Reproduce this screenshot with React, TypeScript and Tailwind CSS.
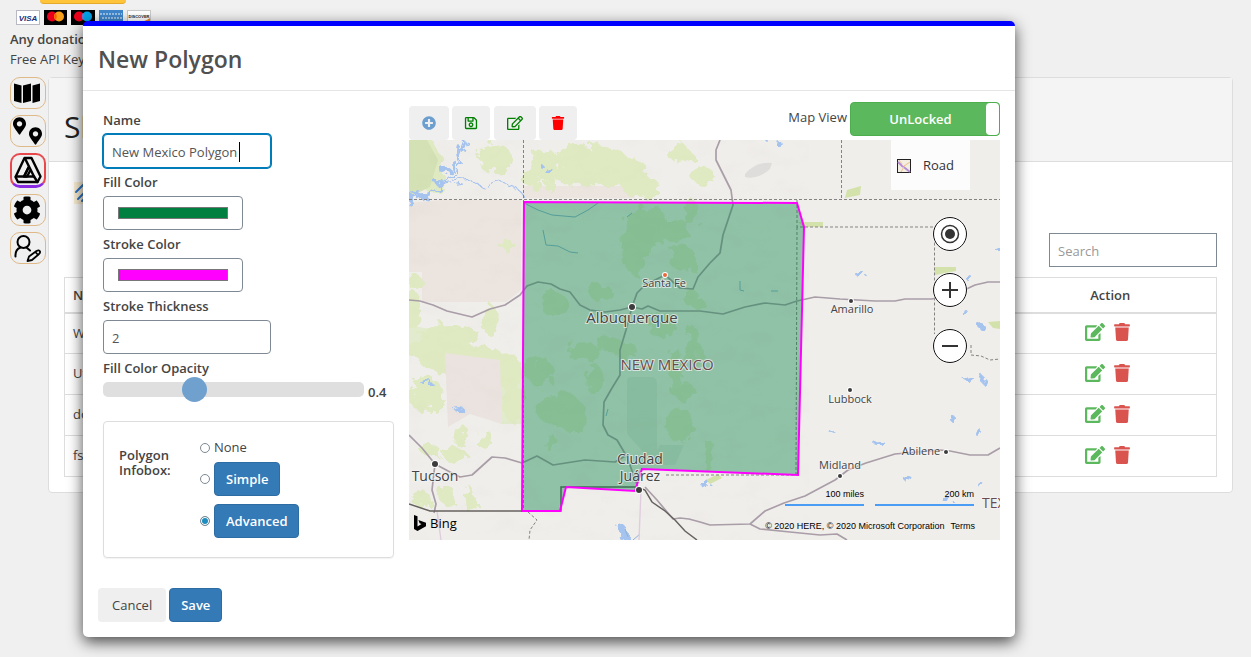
import { useState } from 'react';
import type { ReactNode } from 'react';
import { FaCog, FaEdit, FaMapMarkerAlt, FaPlusCircle, FaRegEdit, FaRegSave, FaTrash } from 'react-icons/fa';

const rows = ['Wyoming', 'Utah', 'downtown', 'fsdf'];

const greens: [number, number, number, number][] = [
  [418, 160, 22, 26], [434, 178, 12, 16], [494, 158, 18, 14], [545, 165, 14, 16], [532, 178, 10, 10],
  [590, 158, 36, 14], [615, 170, 32, 16], [640, 186, 18, 12], [550, 186, 6, 5], [578, 176, 24, 10],
  [680, 155, 12, 8], [703, 176, 12, 9], [680, 152, 7, 10], [508, 246, 9, 5], [415, 282, 8, 7],
  [412, 310, 9, 20], [450, 335, 30, 10], [490, 320, 7, 16], [440, 350, 34, 12], [470, 362, 50, 14],
  [500, 374, 25, 12], [426, 395, 17, 18], [512, 395, 10, 28], [460, 435, 7, 12], [485, 440, 9, 10],
  [430, 450, 10, 6], [455, 455, 12, 7], [422, 500, 10, 8], [470, 500, 4, 14], [447, 495, 8, 10],
];

const forests: [number, number, number, number][] = [
  [635, 245, 13, 30], [652, 225, 14, 20], [676, 230, 14, 12], [682, 258, 14, 12], [690, 212, 8, 14],
  [555, 305, 14, 12], [600, 292, 12, 8], [583, 352, 16, 10], [540, 372, 14, 14], [560, 410, 24, 16],
  [573, 420, 14, 12], [550, 442, 5, 10], [595, 380, 8, 16], [625, 350, 12, 8], [610, 345, 14, 8],
  [680, 425, 14, 18], [645, 434, 9, 7], [708, 455, 6, 16], [675, 365, 7, 18], [693, 350, 7, 24],
  [660, 325, 14, 12], [682, 390, 12, 9], [693, 300, 8, 8],
];

const lakes: [number, number, number, number][] = [
  [445, 170, 5, 5], [453, 165, 3, 6], [459, 152, 2, 7], [439, 182, 5, 3], [422, 194, 9, 3], [411, 200, 5, 5],
  [546, 168, 3, 4], [860, 274, 5, 2], [774, 142, 7, 2], [998, 248, 4, 2], [969, 278, 2, 4], [966, 314, 2, 4],
  [428, 384, 6, 2], [460, 410, 5, 2], [970, 380, 5, 3], [982, 379, 3, 3], [952, 418, 3, 3], [979, 433, 4, 3],
  [879, 443, 6, 2], [908, 479, 4, 3], [831, 431, 2, 2], [947, 499, 5, 3], [979, 483, 3, 2], [705, 484, 3, 5],
  [624, 534, 4, 8], [980, 325, 3, 3],
];

function Blobs({ items, fill, opacity = 1 }: { items: [number, number, number, number][]; fill: string; opacity?: number }) {
  return (
    <g fill={fill} opacity={opacity} filter="url(#rough)">
      {items.map(([cx, cy, rx, ry], i) => (
        <ellipse key={i} cx={cx} cy={cy} rx={rx} ry={ry} />
      ))}
    </g>
  );
}

function City({ x, y, tx, ty, size, children }: { x: number; y: number; tx: number; ty: number; size: number; children: ReactNode }) {
  return (
    <g>
      <circle cx={x} cy={y} r={size > 12 ? 3 : 2} fill="#3c3c3c" stroke="#fff" strokeOpacity="1" strokeWidth="2" />
      <text x={tx} y={ty} fontSize={size} textAnchor="middle">{children}</text>
    </g>
  );
}

function MapDrawing() {
  return (
    <svg
      viewBox="409 140 591 400"
      preserveAspectRatio="xMidYMid slice"
      className="block h-full w-full font-['Open_Sans','Noto_Sans',sans-serif]"
      role="img"
      aria-label="Road map with the New Mexico polygon"
    >
      <defs>
        <filter id="rough" x="-10%" y="-10%" width="120%" height="120%">
          <feTurbulence type="fractalNoise" baseFrequency="0.09" numOctaves="3" seed="4" />
          <feDisplacementMap in="SourceGraphic" scale="18" />
        </filter>
        <filter id="relief" x="0" y="0" width="100%" height="100%">
          <feTurbulence type="fractalNoise" baseFrequency="0.035 0.06" numOctaves="4" seed="8" />
          <feColorMatrix values="0 0 0 0 .55  0 0 0 0 .5  0 0 0 0 .42  .9 0 0 0 -.42" />
        </filter>
      </defs>
      <rect x="409" y="140" width="591" height="400" fill="#f0eeeb" />
      <path d="M409 203L440 200H521V290L506 302H422V272H409Z" fill="#ebe4df" />
      <path d="M523 186H640L634 198H523Z" fill="#ebe4df" />
      <path d="M409 325L450 333 480 350 521 362V424H500V375L470 358 409 350Z" fill="#e2ebcd" />
      <Blobs items={greens} fill="#dfeac2" />
      <path d="M445 353L500 360 502 424 470 414 448 427Z" fill="#eae3df" />
      <path d="M409 140H427L438 160 430 187 409 197Z" fill="#d3e1b4" />
      <path d="M798 222H823V227H804ZM847 190L861 186 860 195 845 198ZM934 267H956V271L935 275ZM706 480L718 474 722 478 710 484ZM988 322L1000 321V329L993 328Z" fill="#d3e2aa" />
      <path d="M745 174Q756 161 772 163L770 169Q758 180 745 177Z" fill="#dedddb" />
      <Blobs items={forests} fill="#c3dc88" opacity={0.32} />
      <path d="M627 380Q627 377 632 377H652Q657 377 657 385V455H646L627 434Z" fill="#e3e4df" />
      <path d="M660 445H684L675 465H648Z" fill="#e3e4df" />
      <rect x="409" y="140" width="400" height="400" filter="url(#relief)" opacity="0.16" />

      <g fill="none" stroke="#a4c2ef" strokeWidth="2.4" filter="url(#rough)">
        <path d="M467 141L460 160 457 173 446 182 436 190 421 198 409 202" />
        <path d="M446 184L470 179 485 188 500 183 517 188 523 197" strokeWidth="1.2" />
      </g>
      <Blobs items={lakes} fill="#a5c3ef" />
      <g fill="none" stroke="#8fb2d4" strokeWidth="1">
        <path d="M524 203L538 210 552 215 575 217 588 210 598 203" />
        <path d="M543 230L546 245 558 246 570 252 578 253M740 281V290L744 291M771 291H778M627 217L632 213M608 409L606 416" />
        <path d="M628 537L625 529M633 540L640 534" />
      </g>

      <g fill="none" stroke="#a99da8" strokeWidth="1.7" strokeLinejoin="round">
        <path d="M409 300L420 301 433 305 447 311 472 317 490 309 505 305 520 295 527 286 538 282 551 284 560 289 570 292 580 305 590 310 605 312 620 310 632 307 642 309 648 306 660 311 700 311 723 314 745 307 765 303 785 305 797 301 815 297 840 299 875 301 895 301 905 299 932 299 960 292 975 285 988 282 1000 282" />
        <path d="M632 307L637 293 645 285 665 275 680 288 693 289 698 277 710 263 720 253 723 235 733 205 731 190 721 170 716 160 716 150 720 140" />
        <path d="M632 307L626 330 620 350 620 375 612 388 604 402 603 425 608 435 617 440 627 457 639 490" />
        <path d="M409 435L422 448 435 464 450 472 460 477 472 475 492 457 505 458 522 463 537 456 553 465 585 460 615 462 627 455" />
        <path d="M435 464L432 490 436 504 434 513" />
        <path d="M645 487L657 500 673 519 680 518 689 519 700 522 710 525 750 524 765 511 784 503 805 496 835 480 848 470 866 463 895 454 940 450 950 451 970 455 988 455 1000 448" />
        <path d="M750 524L760 529 790 532 820 535 837 534 847 540" />
      </g>
      <g fill="none" stroke="#dfcddf" strokeWidth="1.4">
        <path d="M437 511L441 540M641 490L639 540" />
      </g>
      <path d="M409 504L430 511H561V487H637L645 490 652 502 665 511 675 520 685 531 697 540" fill="none" stroke="#66625f" strokeWidth="1.5" />
      <g fill="none" stroke="#858381" strokeWidth="1" strokeDasharray="3 2">
        <path d="M409 199.500H1000M523.500 140V511M841.500 140V199M797 200V227H934.500V334M797 227L796 475H664M971 345V355L981 356 990 360 1000 359" />
        <path d="M528 512L537 520 530 530 529 540" />
      </g>

      <path d="M524 202L797 203 804 227 798 475 642 469 635 491 566 487 560 511H522Z" fill="#008040" fillOpacity="0.4" stroke="#f0f" strokeWidth="2" />

      <g fill="#444" stroke="#f4f4f4" strokeOpacity="0.7" strokeWidth="2" paintOrder="stroke">
        <circle cx="665" cy="275" r="2" fill="#e9683a" stroke="#fff" strokeOpacity="1" />
        <text x="664" y="287" fontSize="11" textAnchor="middle">Santa Fe</text>
        <City x={632} y={307} tx={632} ty={323} size={15}>Albuquerque</City>
        <City x={435} y={464} tx={435} ty={481} size={14}>Tucson</City>
        <City x={639} y={490} tx={640} ty={481} size={14}>Juárez</City>
        <text x="640" y="464" fontSize="14" textAnchor="middle">Ciudad</text>
        <City x={851} y={301} tx={852} ty={313} size={11}>Amarillo</City>
        <City x={850} y={390} tx={850} ty={403} size={11}>Lubbock</City>
        <City x={840} y={476} tx={840} ty={469} size={11}>Midland</City>
        <City x={946} y={452} tx={921} ty={455} size={11}>Abilene</City>
        <g fill="#6a4a4e">
          <text x="667" y="370" fontSize="15" textAnchor="middle">NEW MEXICO</text>
          <text x="982" y="508" fontSize="14">TEXAS</text>
        </g>
      </g>
    </svg>
  );
}

function MapButton({ label, children }: { label: string; children: ReactNode }) {
  return (
    <button aria-label={label} className="size-[34px] rounded-full border border-[#111] bg-white shadow-[0_0_2px_#fff]">
      <svg viewBox="0 0 32 32" className="block size-full" fill="none" stroke="#333" strokeWidth="2">{children}</svg>
    </button>
  );
}

function MapPanel() {
  return (
    <div className="relative h-[400px] overflow-hidden">
      <MapDrawing />
      <button className="absolute top-0 right-[30px] flex h-[50px] w-[79px] items-center gap-3 bg-[#fcfcfc] pt-0.5 pl-1.5 text-[13px] text-[#333]">
        <svg viewBox="0 0 14 14" className="size-3.5">
          <rect x="0.500" y="0.500" width="13" height="13" fill="#f3ede2" stroke="#222" />
          <path d="M1 3L5 7 8 9 13 13" stroke="#b58ad6" strokeWidth="1.800" fill="none" />
          <path d="M2 1L5 5M7 7L13 3M4 13L8 6" stroke="#edc38a" fill="none" />
        </svg>
        Road
      </button>
      <div className="absolute top-[77px] right-[33px] flex flex-col gap-[22px]">
        <MapButton label="Locate me">
          <circle cx="16" cy="16" r="8.500" strokeWidth="1.500" />
          <circle cx="16" cy="16" r="5" fill="#333" stroke="none" />
        </MapButton>
        <MapButton label="Zoom in"><path d="M16 8V24M8 16H24" /></MapButton>
        <MapButton label="Zoom out"><path d="M8 16H24" /></MapButton>
      </div>
      <div className="absolute right-[26px] bottom-[34px] flex gap-[11px] text-right font-['Liberation_Sans',sans-serif] text-[9px] leading-3 text-black">
        <div className="w-[79px] border-b-2 border-[#4a9cf5] pb-1">100 miles</div>
        <div className="w-[99px] border-b-2 border-[#4a9cf5] pb-1">200 km</div>
      </div>
      <div className="absolute right-[25px] bottom-2 flex gap-1.5 font-['Liberation_Sans',sans-serif] text-[9px] leading-3 text-black">
        <span>© 2020 HERE, © 2020 Microsoft Corporation</span>
        <a href="#terms">Terms</a>
      </div>
      <div className="absolute bottom-[7px] left-[5px] flex items-center gap-1 text-[13px] leading-5 text-black">
        <svg viewBox="0 0 12 16" className="h-4 w-3"><path d="M0 0L3.500 1.200V11.500L7.500 9 5.600 8.200 4.400 5 12 7.800V11.300L3.500 16 0 14Z" /></svg>
        Bing
      </div>
    </div>
  );
}

const label = 'flex h-7 items-center pt-0.5 font-semibold';
const field = 'block h-[34px] rounded-[4px] border border-[#7e8993] bg-white';
const primary = 'h-[34px] rounded-[4px] border border-[#2e6da4] bg-[#337ab7] px-[11px] pt-0.5 font-semibold text-white';
const tool = 'flex h-[34px] items-center justify-center rounded-[4px] bg-[#efefef]';

function PolygonForm() {
  const [name, setName] = useState('New Mexico Polygon');
  const [fill, setFill] = useState('#008040');
  const [stroke, setStroke] = useState('#ff00ff');
  const [thickness, setThickness] = useState('2');
  const [opacity, setOpacity] = useState(0.4);
  const [box, setBox] = useState('advanced');
  const radio = (value: string) => (
    <input
      type="radio"
      name="infobox"
      id={`infobox-${value}`}
      aria-label={value}
      checked={box === value}
      onChange={() => setBox(value)}
      className="size-2.5 appearance-none rounded-full border border-[#7e8993] bg-white checked:bg-[#1e8cbe] checked:shadow-[inset_0_0_0_1px_#fff]"
    />
  );
  return (
    <form className="w-[296px] shrink-0 pt-[15px] pl-[5px]" onSubmit={(e) => e.preventDefault()}>
      <label htmlFor="name" className={label}>Name</label>
      <div className="relative w-[168px]">
        <input id="name" value={name} onChange={(e) => setName(e.target.value)} className="block h-[34px] w-full rounded-[4px] border border-[#007cba] bg-white px-2 pt-0.5 text-[#555] shadow-[0_0_0_1px_#007cba] outline-none" />
        <span className="absolute top-2 left-[136px] h-5 w-px bg-black" />
      </div>
      <label htmlFor="fill" className={label}>Fill Color</label>
      <input id="fill" type="color" value={fill} onChange={(e) => setFill(e.target.value)} className={`${field} w-[140px] px-3 py-1.5`} />
      <label htmlFor="stroke" className={label}>Stroke Color</label>
      <input id="stroke" type="color" value={stroke} onChange={(e) => setStroke(e.target.value)} className={`${field} w-[140px] px-3 py-1.5`} />
      <label htmlFor="thickness" className={label}>Stroke Thickness</label>
      <input id="thickness" value={thickness} onChange={(e) => setThickness(e.target.value)} className={`${field} w-[168px] px-2 pt-0.5 text-[#555]`} />
      <label htmlFor="opacity" className={label}>Fill Color Opacity</label>
      <div className="flex h-[15px] items-center gap-1">
        <input
          id="opacity"
          type="range"
          min="0.1"
          max="1"
          step="0.1"
          value={opacity}
          onChange={(e) => setOpacity(Number(e.target.value))}
          className="h-[15px] w-[261px] appearance-none rounded-[5px] bg-[#dfdfdf] [&::-webkit-slider-thumb]:size-[25px] [&::-webkit-slider-thumb]:appearance-none [&::-webkit-slider-thumb]:rounded-full [&::-webkit-slider-thumb]:bg-[#70a1ce]"
        />
        <output htmlFor="opacity" className="pt-1.5 font-semibold">{opacity}</output>
      </div>
      <fieldset className="mt-6 flex h-[137px] rounded-[4px] border border-[#ddd] pt-[17px] pl-[15px] shadow-[0_1px_1px_rgba(0,0,0,0.05)]">
        <div className="w-[81px] pt-[9px] leading-[15px] font-semibold">Polygon<br />Infobox:</div>
        <div className="flex flex-col items-start">
          <label className="flex h-[18px] items-center gap-1">{radio('none')}None</label>
          <div className="mt-[5px] flex items-center gap-1">{radio('simple')}<button className={primary}>Simple</button></div>
          <div className="mt-2 flex items-center gap-1">{radio('advanced')}<button className={primary}>Advanced</button></div>
        </div>
      </fieldset>
    </form>
  );
}

function Dialog() {
  return (
    <div role="dialog" aria-labelledby="title" className="w-full rounded-[5px] border-t-5 border-[#00f] bg-white text-[13px] text-[#444] shadow-[0_5px_15px_rgba(0,0,0,0.7)]">
      <header className="border-b border-[#e5e5e5] px-[15px] pt-[17px] pb-[15px]">
        <h2 id="title" className="text-[23px] leading-8 font-semibold text-[#505050]">New Polygon</h2>
      </header>
      <div className="flex gap-[15px] px-[15px]">
        <PolygonForm />
        <section className="min-w-0 flex-1 pt-[11px]">
          <div className="flex h-[38px] items-start justify-between">
            <div className="flex pt-1">
              <button aria-label="Add" className={`${tool} w-10 text-[#6c9fcf]`}><FaPlusCircle size={14} /></button>
              <button aria-label="Save shape" className={`${tool} ml-[3px] w-[38px] text-[#008000]`}><FaRegSave size={14} /></button>
              <button aria-label="Edit shape" className={`${tool} ml-1 w-[42px] text-[#008000]`}><FaRegEdit size={16} /></button>
              <button aria-label="Delete shape" className={`${tool} ml-[3px] w-[38px] text-[#f00]`}><FaTrash size={14} /></button>
            </div>
            <div className="flex items-center gap-[3px]">
              <span className="pb-0.5">Map View</span>
              <button role="switch" aria-checked="true" className="flex h-[34px] w-[150px] items-stretch rounded-[4px] border border-[#4cae4c] bg-[#5cb85c] font-semibold text-white">
                <span className="flex-1 self-center pt-0.5 pl-1">UnLocked</span>
                <span className="w-[13px] rounded-[4px] bg-white" />
              </button>
            </div>
          </div>
          <MapPanel />
        </section>
      </div>
      <footer className="flex gap-[3px] px-[15px] pt-[30px] pb-[15px]">
        <button className="h-[34px] rounded-[4px] bg-[#efefef] px-3.5 pt-0.5">Cancel</button>
        <button className={primary}>Save</button>
      </footer>
    </div>
  );
}

function SideNav() {
  const item = 'flex h-8 w-9 items-center justify-center rounded-[10px] border border-[#deb887] pr-0.5 text-black';
  return (
    <nav className="flex flex-col gap-1.5">
      <button aria-label="Maps" className={item}>
        <svg viewBox="0 0 26 20" className="h-5 w-[26px]"><path d="M0 0.500L7.500 2.500V20L0 18ZM9 2.500L17 0.500V18L9 20ZM18.500 2.500L26 0.500V18L18.500 20Z" /></svg>
      </button>
      <button aria-label="Pins" className={item}>
        <span className="flex gap-[3px]">
          <FaMapMarkerAlt className="mb-2.5 h-[18px] w-[13px]" />
          <FaMapMarkerAlt className="mt-2.5 h-[18px] w-[13px]" />
        </span>
      </button>
      <button aria-label="Shapes" className="flex h-[35px] w-9 items-center justify-center rounded-[10px] border-2 border-[#e8474c] border-b-3 border-b-[#8a2be2] text-black">
        <svg viewBox="0 0 28 28" className="size-7" fill="none" stroke="currentColor" strokeWidth="2.400" strokeLinejoin="round" strokeLinecap="round">
          <path d="M10.500 2H17.500L26.500 20.500 23.500 26H4L1.500 21Z" />
          <path d="M11 2.500L20 20.500H10L14.500 11.500" />
          <path d="M14.500 11.500L10 20.500H13L16 15M20 20.500L23.500 26M10 20.500H2" />
        </svg>
      </button>
      <button aria-label="Settings" className={item}><FaCog size={28} /></button>
      <button aria-label="Account" className={item}>
        <svg viewBox="0 0 28 28" className="size-7" fill="none" stroke="currentColor" strokeWidth="2" strokeLinejoin="round" strokeLinecap="round">
          <circle cx="10.500" cy="8" r="6" />
          <path d="M2.500 22.500Q2 15.500 7.500 13.500M13.500 13.500L17 16.500" />
          <path d="M14.500 27L16 22.500 23.500 17Q26 15.500 27 17.500 27.500 19 25.500 20.500L19 26ZM22.500 18L25 21" strokeWidth="1.800" />
        </svg>
      </button>
    </nav>
  );
}

function PaymentCards() {
  return (
    <svg viewBox="0 0 135 15" className="h-[15px] w-[135px]" role="img" aria-label="Accepted cards">
      <rect x="0.500" y="0.500" width="23" height="14" fill="#fff" stroke="#b9b9c4" />
      <text x="12" y="10.500" fontSize="8" fontWeight="bold" fontStyle="italic" fontFamily="Liberation Sans" textAnchor="middle" fill="#1a2f7c">VISA</text>
      <rect x="28" width="23" height="15" fill="#000" />
      <circle cx="36" cy="6.500" r="5" fill="#eb001b" /><circle cx="43" cy="6.500" r="5" fill="#f79e1b" />
      <path d="M39.500 3Q42 6.500 39.500 10 37 6.500 39.500 3Z" fill="#ff5f00" />
      <rect x="55" width="24" height="15" fill="#000" />
      <circle cx="63" cy="6.500" r="5" fill="#eb001b" /><circle cx="71" cy="6.500" r="5" fill="#00a2e5" />
      <path d="M67 3Q69.500 6.500 67 10 64.500 6.500 67 3Z" fill="#7375cf" />
      <rect x="83" width="24" height="15" fill="#3f86cb" />
      <path d="M84 4H106M86 8H106" stroke="#b5d3ee" strokeWidth="1.500" strokeDasharray="2 1" />
      <rect x="111.500" y="0.500" width="23" height="14" fill="#fff" stroke="#c9c9c9" />
      <text x="123" y="8" fontSize="4" fontWeight="bold" fontFamily="Liberation Sans" textAnchor="middle" fill="#222">DISCOVER</text>
      <path d="M134 8V14H118Q128 12 134 8Z" fill="#f58220" />
    </svg>
  );
}

export default function App() {
  return (
    <div className="relative min-h-screen overflow-hidden bg-[#f0f0f0] font-['Open_Sans','Noto_Sans',sans-serif] text-[13px] text-[#444]">
      <div className="px-2.5">
        <div className="ml-[30px] h-1 w-[86px] rounded-b-[10px] border-b border-[#e5a92c] bg-[#ffc439]" />
        <div className="mt-1.5 ml-1.5 flex"><PaymentCards /></div>
        <p className="mt-1 leading-[20px] font-semibold">Any donation is appreciated</p>
        <p className="leading-[20px]">Free API Key: Bing Maps</p>
        <div className="mt-2 flex gap-0.5">
          <SideNav />
          <main className="mr-2 flex-1 rounded-[4px] border border-[#ddd] bg-white">
            <header className="h-[84px] border-b border-[#ddd] bg-[#f4f4f4] px-[15px] pt-6">
              <h1 className="text-[30px] leading-[50px] font-medium text-[#222]">Shapes</h1>
            </header>
            <div className="px-[15px] pt-5 pb-[15px]">
              <svg viewBox="0 0 22 22" className="ml-2.5 size-[22px]">
                <rect width="22" height="22" fill="#fdf0d5" />
                <path d="M2 10L10 2M4 17L17 4M8 19L19 8" stroke="#2e76d0" strokeWidth="2" strokeLinecap="round" />
              </svg>
              <div className="mt-[29px] flex justify-end">
                <input aria-label="Search" placeholder="Search" className="h-[34px] w-[168px] border border-[#7e8993] bg-white px-2 pt-0.5 placeholder:text-[#999]" />
              </div>
              <table className="mt-2.5 w-full border-collapse border border-[#ddd]">
                <thead>
                  <tr className="h-[35px] border-b-2 border-[#ddd]">
                    <th className="px-2 pt-0.5 text-left font-semibold">Name</th>
                    <th className="w-[214px] pt-0.5 pl-0.5 font-semibold">Action</th>
                  </tr>
                </thead>
                <tbody>
                  {rows.map((row) => (
                    <tr key={row} className="h-[41px] border-b border-[#ddd]">
                      <td className="px-2">{row}</td>
                      <td className="pr-1 pb-0.5">
                        <div className="flex items-center justify-center gap-[9px]">
                          <button aria-label={`Edit ${row}`} className="text-[#5cb85c]"><FaEdit size={20} /></button>
                          <button aria-label={`Delete ${row}`} className="text-[#d9534f]"><FaTrash className="h-[18px] w-4" /></button>
                        </div>
                      </td>
                    </tr>
                  ))}
                </tbody>
              </table>
            </div>
          </main>
        </div>
      </div>
      <div className="absolute inset-x-0 top-0 pt-[21px] pr-[236px] pb-5 pl-[83px]">
        <Dialog />
      </div>
    </div>
  );
}
